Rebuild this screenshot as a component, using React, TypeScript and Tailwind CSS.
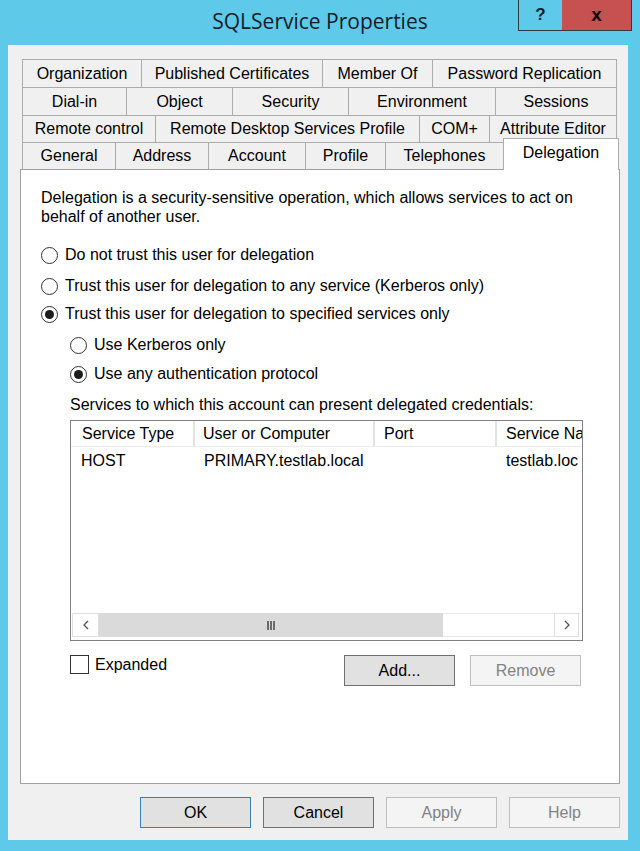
import React from 'react';

type Tab = { label: string; w: string };

const tabRows: Tab[][] = [
  [
    { label: 'Organization', w: 'w-[119px]' },
    { label: 'Published Certificates', w: 'w-[181px]' },
    { label: 'Member Of', w: 'w-[110px]' },
    { label: 'Password Replication', w: 'w-[185px]' },
  ],
  [
    { label: 'Dial-in', w: 'w-[104px]' },
    { label: 'Object', w: 'w-[106px]' },
    { label: 'Security', w: 'w-[116px]' },
    { label: 'Environment', w: 'w-[147px]' },
    { label: 'Sessions', w: 'w-[122px]' },
  ],
  [
    { label: 'Remote control', w: 'w-[133px]' },
    { label: 'Remote Desktop Services Profile', w: 'w-[264px]' },
    { label: 'COM+', w: 'w-[70px]' },
    { label: 'Attribute Editor', w: 'w-[128px]' },
  ],
  [
    { label: 'General', w: 'w-[93px]' },
    { label: 'Address', w: 'w-[93px]' },
    { label: 'Account', w: 'w-[97px]' },
    { label: 'Profile', w: 'w-[80px]' },
    { label: 'Telephones', w: 'w-[118px]' },
  ],
];

const rowHeights = ['h-[28px]', 'h-[28px]', 'h-[27px]', 'h-[27px]'];

const Radio = ({ checked }: { checked?: boolean }) => (
  <span className="flex h-[17px] w-[17px] shrink-0 items-center justify-center rounded-full border border-[#333333] bg-white">
    {checked && <span className="h-[9px] w-[9px] rounded-full bg-[#1b1b1b]" />}
  </span>
);

const RadioRow = ({ label, checked, className }: { label: string; checked?: boolean; className: string }) => (
  <div className={`flex h-[20px] items-center gap-[7px] ${className}`}>
    <Radio checked={checked} />
    <span>{label}</span>
  </div>
);

const Button = ({ label, disabled, primary, className = '' }: { label: string; disabled?: boolean; primary?: boolean; className?: string }) => (
  <div
    className={`flex h-[31px] w-[111px] items-center justify-center border ${
      disabled
        ? 'border-[#bfbfbf] bg-[#f4f4f4] text-[#838383]'
        : primary
        ? 'border-[#3c7fb1] bg-[#e1e1e1] text-black'
        : 'border-[#707070] bg-[#e1e1e1] text-black'
    } ${className}`}
  >
    {label}
  </div>
);

export default function App() {
  return (
    <div className="flex h-[851px] w-[640px] flex-col bg-[#5fc9ea] text-[16px] text-black [font-family:'Liberation_Sans',Arial,sans-serif]">
      {/* title bar */}
      <div className="grid h-[45px] grid-cols-[1fr_auto_1fr]">
        <div />
        <div className="self-center pb-px text-[21px] text-[#111d27] [font-family:'Open_Sans','Noto_Sans',sans-serif]">
          SQLService Properties
        </div>
        <div className="flex items-start justify-end pr-[8px]">
          <div className="flex h-[31px] w-[44px] items-center justify-center border-b border-l border-[#2f3a40] bg-[#5fc9ea] text-[17px] font-bold text-[#10222e]">
            ?
          </div>
          <div className="flex h-[31px] w-[70px] items-center justify-center border-b border-r border-[#2f3a40] bg-[#c75050] text-[19px] font-bold text-black">
            x
          </div>
        </div>
      </div>

      {/* client area */}
      <div className="mx-[8px] flex h-[795px] w-[620px] flex-col bg-[#f0f0f0]">
        {/* tabs */}
        <div className="ml-[14px] mt-[14px] flex flex-col">
          {tabRows.map((row, i) => (
            <div key={i} className={`flex items-end ${rowHeights[i]}`}>
              {row.map((t, j) => (
                <div
                  key={t.label}
                  className={`flex h-full items-center justify-center whitespace-nowrap border-l border-t border-[#acacac] bg-[#f0f0f0] ${t.w} ${
                    j === row.length - 1 && i < 3 ? 'border-r' : ''
                  }`}
                >
                  {t.label}
                </div>
              ))}
              {i === 3 && (
                <div className="relative z-10 -mb-px flex h-[32px] w-[116px] shrink-0 items-center justify-center border-l border-r border-t border-[#acacac] bg-white pb-[3px]">
                  Delegation
                </div>
              )}
            </div>
          ))}
        </div>

        {/* tab page */}
        <div className="ml-[12px] flex h-[615px] w-[600px] flex-col border border-[#a0a0a0] bg-white">
          <p className="ml-[20px] mt-[18px] w-[540px] leading-[19px]">
            Delegation is a security-sensitive operation, which allows services to act on behalf of another user.
          </p>

          <RadioRow className="ml-[20px] mt-[19px]" label="Do not trust this user for delegation" />
          <RadioRow className="ml-[20px] mt-[11px]" label="Trust this user for delegation to any service (Kerberos only)" />
          <RadioRow className="ml-[20px] mt-[8px]" checked label="Trust this user for delegation to specified services only" />
          <RadioRow className="ml-[49px] mt-[11px]" label="Use Kerberos only" />
          <RadioRow className="ml-[49px] mt-[9px]" checked label="Use any authentication protocol" />

          <div className="ml-[49px] mt-[11px] leading-[19px]">Services to which this account can present delegated credentials:</div>

          {/* list view */}
          <div className="ml-[49px] mt-[6px] flex h-[221px] w-[513px] flex-col border border-[#828282] bg-white">
            <div className="flex h-[26px] shrink-0 items-center overflow-hidden whitespace-nowrap border-b border-[#ececec]">
              <div className="flex h-full w-[124px] shrink-0 items-center border-r-2 border-[#e3e3e3] pl-[11px]">Service Type</div>
              <div className="flex h-full w-[180px] shrink-0 items-center border-r-2 border-[#e3e3e3] pl-[8px]">User or Computer</div>
              <div className="flex h-full w-[122px] shrink-0 items-center border-r-2 border-[#e3e3e3] pl-[9px]">Port</div>
              <div className="flex h-full items-center pl-[9px]">Service Na</div>
            </div>
            <div className="flex h-[27px] shrink-0 items-center overflow-hidden whitespace-nowrap">
              <div className="w-[124px] shrink-0 pl-[10px]">HOST</div>
              <div className="w-[180px] shrink-0 pl-[9px]">PRIMARY.testlab.local</div>
              <div className="w-[122px] shrink-0" />
              <div className="pl-[9px]">testlab.loc</div>
            </div>
            <div className="flex-1" />
            {/* horizontal scroll bar */}
            <div className="mb-[3px] flex h-[24px] shrink-0 pl-px pr-[3px]">
              <div className="flex w-[27px] shrink-0 items-center justify-center border border-[#e0e0e0]">
                <svg width="6" height="10" viewBox="0 0 6 10">
                  <polyline points="5,1 1,5 5,9" fill="none" stroke="#555" strokeWidth="1.3" />
                </svg>
              </div>
              <div className="flex w-[344px] shrink-0 items-center justify-center bg-[#dadada]">
                <svg width="8" height="9" viewBox="0 0 8 9">
                  <rect x="0" y="0" width="2" height="9" fill="#6b6b6b" />
                  <rect x="3" y="0" width="2" height="9" fill="#6b6b6b" />
                  <rect x="6" y="0" width="2" height="9" fill="#6b6b6b" />
                </svg>
              </div>
              <div className="flex-1 border-y border-[#e8e8e8]" />
              <div className="flex w-[25px] shrink-0 items-center justify-center border border-[#e0e0e0]">
                <svg width="6" height="10" viewBox="0 0 6 10">
                  <polyline points="1,1 5,5 1,9" fill="none" stroke="#555" strokeWidth="1.3" />
                </svg>
              </div>
            </div>
          </div>

          <div className="ml-[49px] mt-[14px] flex w-[511px] items-start justify-between">
            <div className="flex items-center gap-[6px]">
              <span className="h-[19px] w-[19px] border border-[#333333] bg-white" />
              <span className="leading-[19px]">Expanded</span>
            </div>
            <div className="flex gap-[15px]">
              <Button label="Add..." />
              <Button label="Remove" disabled />
            </div>
          </div>
        </div>

        {/* dialog buttons */}
        <div className="mt-[13px] flex justify-end gap-[12px] pr-[8px]">
          <Button label="OK" primary />
          <Button label="Cancel" />
          <Button label="Apply" disabled />
          <Button label="Help" disabled />
        </div>
      </div>
    </div>
  );
}
